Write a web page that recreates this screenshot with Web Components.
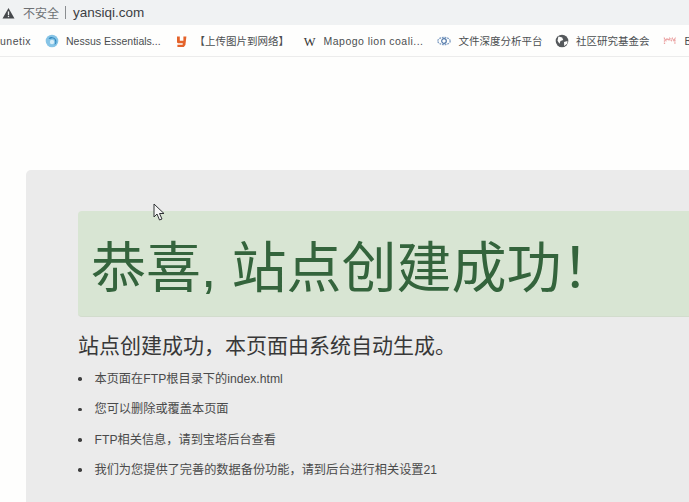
<!DOCTYPE html>
<html lang="zh">
<head>
<meta charset="utf-8">
<title>yansiqi.com</title>
<style>
  html, body { margin: 0; height: 100%; overflow: hidden; background: #fefefd; }
  body { font-family: "Liberation Sans", "Noto Sans CJK SC", sans-serif; display: flex; flex-direction: column; height: 502px; position: relative; }
</style>
</head>
<body>
<address-bar>yansiqi.com</address-bar>
<bookmark-bar>
  <book-mark track="0.5">unetix</book-mark>
  <book-mark gap="14" icon="nessus">Nessus Essentials...</book-mark>
  <book-mark gap="13" icon="y">【上传图片到网络】</book-mark>
  <book-mark gap="13.5" icon="w" track="0.47">Mapogo lion coali...</book-mark>
  <book-mark gap="14" icon="eye">文件深度分析平台</book-mark>
  <book-mark gap="12.5" icon="globe">社区研究基金会</book-mark>
  <book-mark gap="14" icon="red">Bi</book-mark>
</bookmark-bar>
<site-page>
  <success-banner>恭喜, 站点创建成功！</success-banner>
  <h2 slot="lead">站点创建成功，本页面由系统自动生成。</h2>
  <list-row>本页面在FTP根目录下的index.html</list-row>
  <list-row>您可以删除或覆盖本页面</list-row>
  <list-row>FTP相关信息，请到宝塔后台查看</list-row>
  <list-row>我们为您提供了完善的数据备份功能，请到后台进行相关设置21</list-row>
</site-page>
<mouse-cursor></mouse-cursor>
<script>
class AddressBar extends HTMLElement {
    constructor() {
        super();
        this.attachShadow({ mode: 'open' });
        this.shadowRoot.innerHTML = `
      <style>
        :host {
          display: flex;
          flex: none;
          align-items: center;
          height: 25px;
          padding-left: 2px;
          background: #f0f2f3;
          color: #45484b;
          font-size: 12px;
        }
        svg { width: 13px; height: 12px; margin-right: 8px; }
        .warn { color: #6d7073; }
        .sep { width: 1px; height: 13px; background: #8a8d90; margin: 0 7px 0 6px; }
        .url { font-size: 13.5px; color: #3c4043; }
      </style>
      <svg viewBox="0 0 14 13"><path d="M7 1 L13.5 12.5 H.5 Z" fill="#46494c"/><rect x="6.3" y="4.8" width="1.4" height="4" fill="#f0f2f3"/><rect x="6.3" y="9.6" width="1.4" height="1.4" fill="#f0f2f3"/></svg>
      <span class="warn">不安全</span>
      <span class="sep"></span>
      <span class="url"><slot></slot></span>
    `;
    }
}

const ICONS = {
    nessus: '<circle cx="7" cy="7" r="6.3" fill="#86c4e6"/><path d="M3.5 4.5a4.6 4.6 0 0 1 7 .5a4.4 4.4 0 0 1-1 6a5 5 0 0 0 .2-5.5a3.6 3.6 0 0 0-4.7-.6z" fill="#2f86bd"/><circle cx="7" cy="8" r="2.2" fill="#d8eef8"/>',
    y: '<path d="M3 2.5h2.8v4.3h3.6V2.5h3l-1 8.5-1.6 2H3.4v-2.2h5.2l.2-1.6H4.2L3 8.4z" fill="#e4632b"/>',
    w: '<text x="7" y="11.5" text-anchor="middle" font-family="Liberation Serif" font-size="12.5" fill="#333">W</text>',
    eye: '<ellipse cx="7" cy="7" rx="6.2" ry="3.6" fill="none" stroke="#7d9cc2" stroke-width="1.3" stroke-dasharray="1.8 .8"/><circle cx="7" cy="7" r="2.3" fill="none" stroke="#4f77a8" stroke-width="1.2"/>',
    globe: '<circle cx="7" cy="7" r="6.3" fill="#55595c"/><path d="M3.4 2.6l3.8.8 1 2.6-2.7 1-1 2.7-2-3zM9 8l3.4-1 0 2.6-3.2 2.4z" fill="#fefefd"/>',
    red: '<path d="M1.5 10V4.5l1.6 2 1-2.2 1.6 2.2 1-2.2 1.6 2.2 1-2.2 1.6 2.2 1-1.6V10" fill="none" stroke="#eba3a3" stroke-width="1.3" stroke-dasharray="1.5 .7"/>'
};

class BookMark extends HTMLElement {
    constructor() {
        super();
        this.attachShadow({ mode: 'open' });
    }

    connectedCallback() {
        const icon = this.getAttribute('icon');
        const gap = this.getAttribute('gap') || 0;
        const track = this.getAttribute('track') || 0;
        this.shadowRoot.innerHTML = `
      <style>
        :host {
          display: inline-flex;
          flex: none;
          align-items: center;
          gap: 7px;
          margin-left: ${gap}px;
          font-size: 10.5px;
          letter-spacing: ${track}px;
          color: #4b4e51;
          white-space: nowrap;
        }
        svg { width: 14px; height: 14px; flex: none; }
      </style>
      ${icon ? `<svg viewBox="0 0 14 14">${ICONS[icon]}</svg>` : ''}
      <slot></slot>
    `;
    }
}

class BookmarkBar extends HTMLElement {
    constructor() {
        super();
        this.attachShadow({ mode: 'open' });
        this.shadowRoot.innerHTML = `
      <style>
        :host {
          display: flex;
          flex: none;
          align-items: center;
          box-sizing: border-box;
          height: 32px;
          background: #fefefd;
          border-bottom: 1px solid #ececec;
          overflow: hidden;
        }
      </style>
      <slot></slot>
    `;
    }
}

class SitePage extends HTMLElement {
    constructor() {
        super();
        this.attachShadow({ mode: 'open' });
        this.shadowRoot.innerHTML = `
      <style>
        :host {
          display: block;
          flex: 1;
          min-height: 0;
          padding: 113px 0 0 26px;
          overflow: hidden;
        }
        .card {
          background: #ebebeb;
          border-radius: 5px 0 0 5px;
          padding: 41px 0 40px 52px;
          height: 400px;
        }
        ::slotted(h2) {
          margin: 14px 0 10px;
          font-size: 21px;
          line-height: 30px;
          font-weight: 400;
          color: #383838;
        }
      </style>
      <div class="card">
        <slot name="banner"></slot>
        <slot name="lead"></slot>
        <slot></slot>
      </div>
    `;
    }
}

class SuccessBanner extends HTMLElement {
    constructor() {
        super();
        this.setAttribute('slot', 'banner');
        this.attachShadow({ mode: 'open' });
        this.shadowRoot.innerHTML = `
      <style>
        :host {
          display: block;
          height: 106px;
          box-sizing: border-box;
          padding-left: 13px;
          background: #d8e5d3;
          border-radius: 4px 0 0 4px;
          border-bottom: 1px solid #d2dccd;
          color: #34643c;
          font-size: 55px;
          line-height: 115px;
          white-space: nowrap;
          overflow: hidden;
        }
      </style>
      <slot></slot>
    `;
    }
}

class ListRow extends HTMLElement {
    constructor() {
        super();
        this.attachShadow({ mode: 'open' });
        this.shadowRoot.innerHTML = `
      <style>
        :host {
          display: flex;
          align-items: center;
          gap: 13px;
          height: 16px;
          margin-bottom: 14.4px;
          font-size: 12.2px;
          line-height: 16px;
          color: #4a4a4a;
        }
        .dot { width: 3.5px; height: 3.5px; border-radius: 50%; background: #3f3f3f; flex: none; }
      </style>
      <span class="dot"></span>
      <span><slot></slot></span>
    `;
    }
}

class MouseCursor extends HTMLElement {
    constructor() {
        super();
        this.attachShadow({ mode: 'open' });
        this.shadowRoot.innerHTML = `
      <style>
        :host { position: absolute; left: 153px; top: 203px; width: 12px; height: 18px; }
        svg { display: block; }
      </style>
      <svg width="12" height="18" viewBox="0 0 12 18"><path d="M1 1V14L4 11L6.5 17L9 16L6.5 10.5H11Z" fill="#f6f6f6" stroke="#2f3235" stroke-width="1"/></svg>
    `;
    }
}

customElements.define('address-bar', AddressBar);
customElements.define('book-mark', BookMark);
customElements.define('bookmark-bar', BookmarkBar);
customElements.define('site-page', SitePage);
customElements.define('success-banner', SuccessBanner);
customElements.define('list-row', ListRow);
customElements.define('mouse-cursor', MouseCursor);
</script>
</body>
</html>
